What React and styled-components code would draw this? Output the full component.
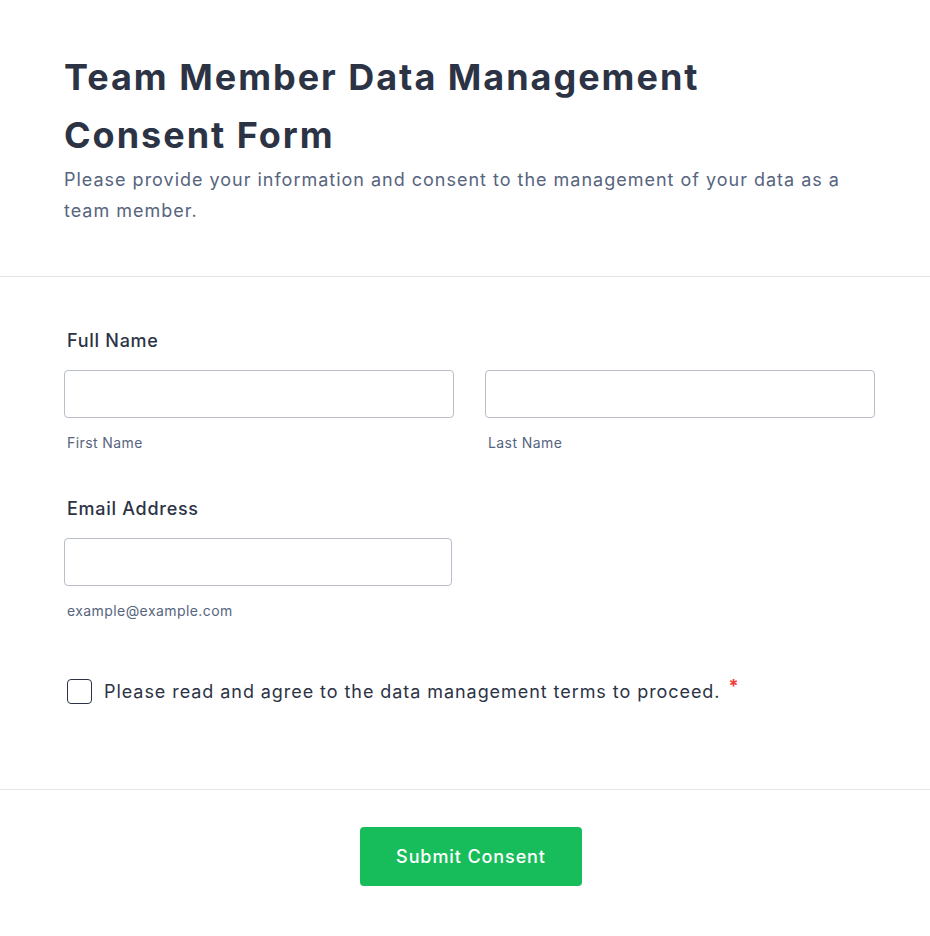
import styled, { createGlobalStyle } from "styled-components";

const GlobalStyle = createGlobalStyle`
    * { box-sizing: border-box; }
    body {
        margin: 0;
        background: #ffffff;
        font-family: Inter, "Noto Sans", sans-serif;
        color: #2c3345;
        letter-spacing: 0.05em;
    }
`;

const App = () => {
    return (
        <Page>
            <GlobalStyle />
            <Header>
                <Title>Team Member Data Management Consent Form</Title>
                <Subtitle>Please provide your information and consent to the management of your data as a team member.</Subtitle>
            </Header>
            <FormBody>
                <Field>
                    <Label>Full Name</Label>
                    <NameRow>
                        <Column>
                            <Input type="text" />
                            <SubLabel>First Name</SubLabel>
                        </Column>
                        <Column>
                            <Input type="text" />
                            <SubLabel>Last Name</SubLabel>
                        </Column>
                    </NameRow>
                </Field>
                <Field>
                    <Label>Email Address</Label>
                    <Column $width="388px">
                        <Input type="email" />
                        <SubLabel>example@example.com</SubLabel>
                    </Column>
                </Field>
                <CheckRow>
                    <Checkbox type="checkbox" />
                    <CheckText>Please read and agree to the data management terms to proceed.</CheckText>
                    <Required>*</Required>
                </CheckRow>
            </FormBody>
            <Footer>
                <SubmitButton>Submit Consent</SubmitButton>
            </Footer>
        </Page>
    );
};

export default App;

const Page = styled.div`
    width: 930px;
    min-height: 936px;
    background: #ffffff;
`;

const Header = styled.div`
    padding: 48px 64px 50px;
    border-bottom: 1px solid #e3e5ea;
`;

const Title = styled.h1`
    margin: 0;
    max-width: 720px;
    font-size: 36px;
    line-height: 58px;
    font-weight: 700;
    letter-spacing: 0.055em;
    color: #2c3345;
`;

const Subtitle = styled.p`
    margin: 0;
    max-width: 811px;
    font-size: 18px;
    line-height: 31px;
    letter-spacing: 0.055em;
    color: #57647e;
`;

const FormBody = styled.div`
    padding: 50px 55px 84px 64px;
    display: flex;
    flex-direction: column;
    gap: 42px;
    border-bottom: 1px solid #e3e5ea;
`;

const Field = styled.div`
    display: flex;
    flex-direction: column;
`;

const Label = styled.label`
    padding-left: 3px;
    margin-bottom: 16px;
    font-size: 18px;
    line-height: 27px;
    font-weight: 500;
    letter-spacing: 0.04em;
    color: #2c3345;
`;

const NameRow = styled.div`
    display: grid;
    grid-template-columns: 390px 390px;
    column-gap: 31px;
`;

const Column = styled.div`
    display: flex;
    flex-direction: column;
    width: ${(p) => p.$width || "auto"};
`;

const Input = styled.input`
    height: 48px;
    width: 100%;
    border: 1px solid #b8bdc9;
    border-radius: 4px;
    padding: 0 12px;
    font-family: inherit;
    font-size: 16px;
    background: #ffffff;
`;

const SubLabel = styled.span`
    padding-left: 3px;
    margin-top: 15px;
    font-size: 14px;
    line-height: 20px;
    letter-spacing: 0.03em;
    color: #57647e;
`;

const CheckRow = styled.div`
    display: flex;
    align-items: center;
    padding-left: 3px;
    margin-top: 15px;
`;

const Checkbox = styled.input`
    appearance: none;
    flex-shrink: 0;
    margin: 0 12px 0 0;
    width: 25px;
    height: 25px;
    border: 1.5px solid #2c3345;
    border-radius: 4px;
    background: #ffffff;
`;

const CheckText = styled.span`
    font-size: 18px;
    line-height: 27px;
    letter-spacing: 0.052em;
    color: #2c3345;
`;

const Required = styled.span`
    align-self: flex-start;
    margin-left: 8px;
    margin-top: -3px;
    font-size: 18px;
    font-weight: 700;
    color: #f23a3c;
`;

const Footer = styled.div`
    display: flex;
    justify-content: center;
    padding: 37px 0 50px 12px;
`;

const SubmitButton = styled.button`
    width: 222px;
    height: 59px;
    border: none;
    border-radius: 4px;
    background: #18bd5b;
    color: #ffffff;
    font-family: inherit;
    font-size: 18px;
    font-weight: 500;
    letter-spacing: 0.05em;
    cursor: pointer;
`;
